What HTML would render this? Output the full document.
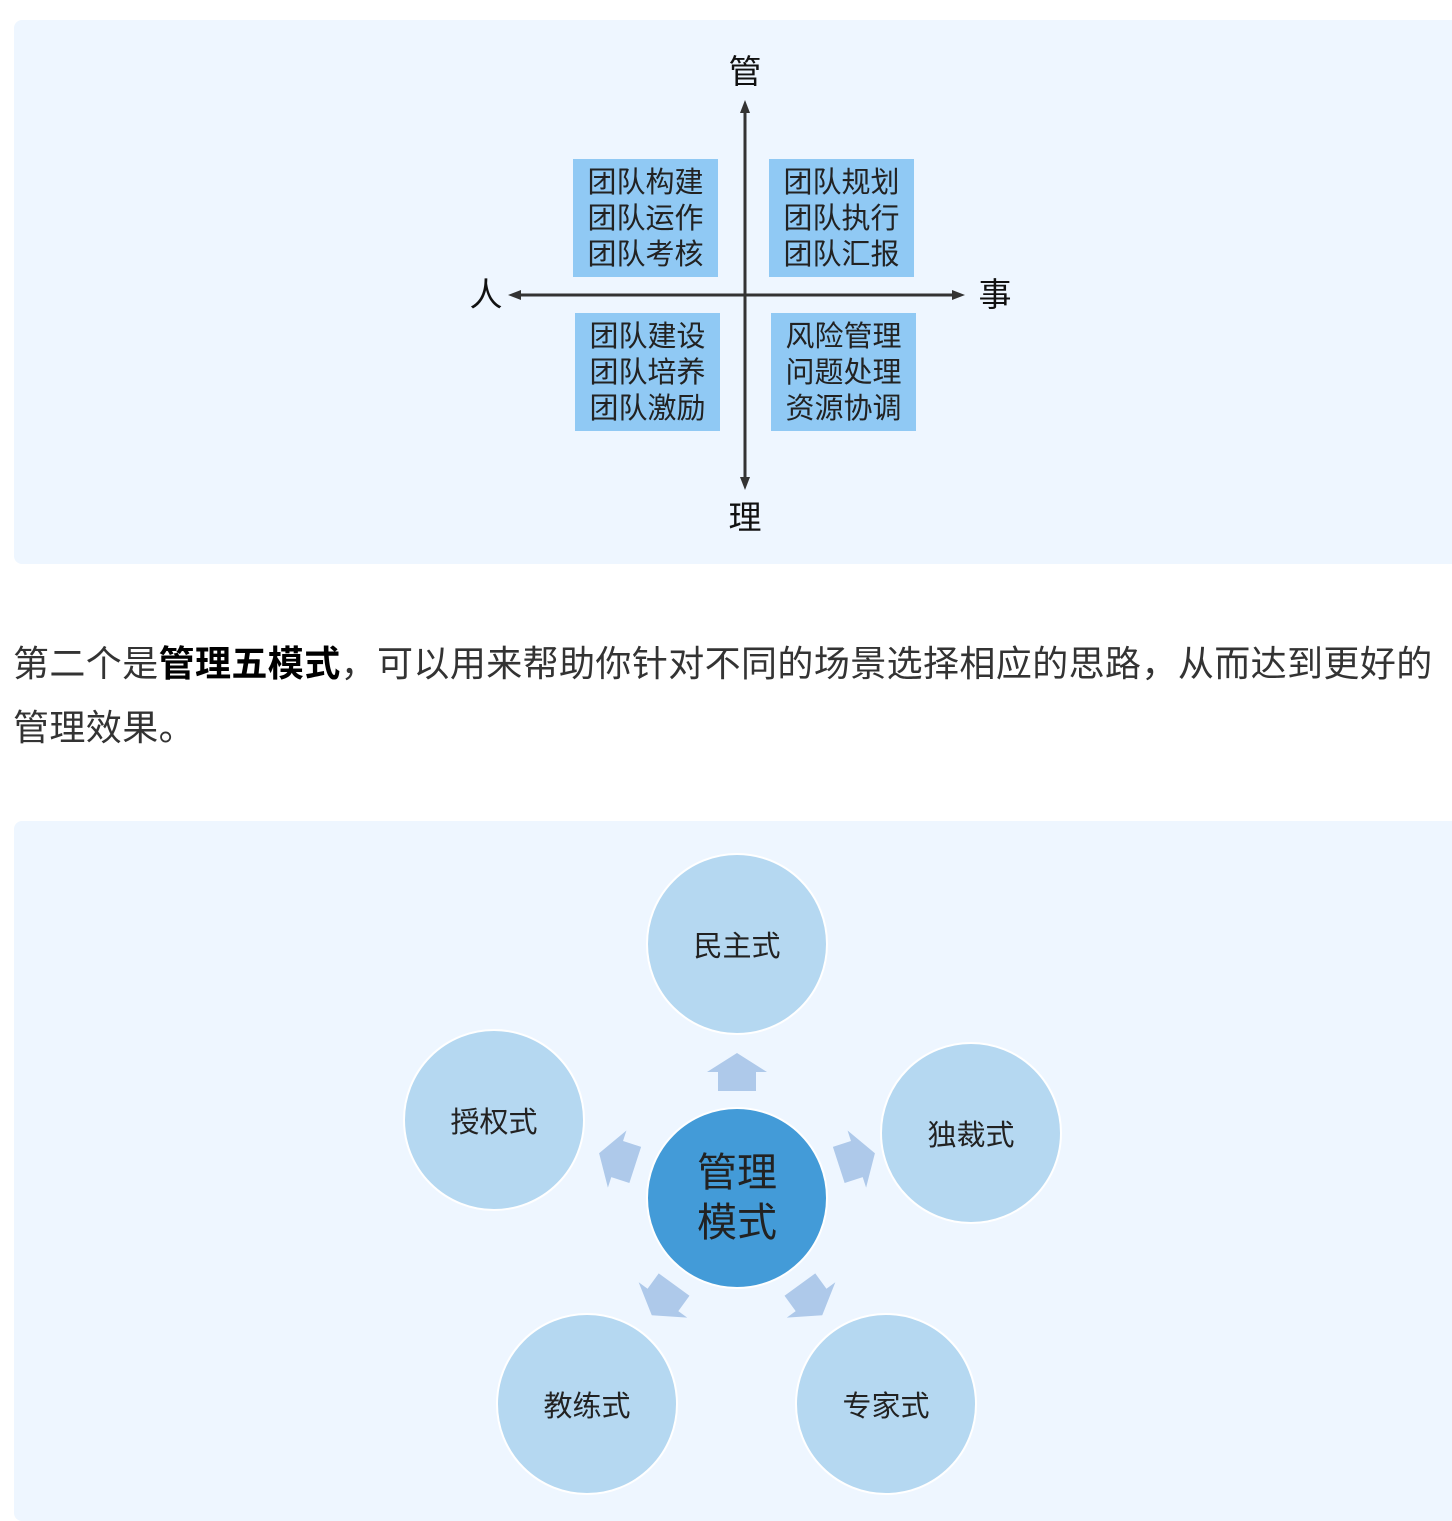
<!DOCTYPE html>
<html><head><meta charset="utf-8"><style>
body{margin:0;width:1452px;height:1500px;background:#fff;position:relative;overflow:hidden;font-family:"Liberation Sans","Noto Sans CJK SC",sans-serif;color:#222}
.panel{position:absolute;left:14px;width:1450px;background:#eef6ff;border-radius:8px}
.box{position:absolute;width:145px;height:118px;background:#90c9f4;box-sizing:border-box;padding:6px 0 0 0;font-size:29px;line-height:36px;text-align:center;color:#222}
.lbl{position:absolute;font-size:33px;line-height:40px;width:40px;text-align:center;color:#111}
.c{position:absolute;width:182px;height:182px;border-radius:50%;background:#b5d8f1;border:2px solid #fff;display:flex;align-items:center;justify-content:center;font-size:29px;color:#222;box-sizing:border-box}
p{position:absolute;left:13px;top:632px;margin:0;width:1440px;font-size:36px;line-height:64px;color:#333;letter-spacing:0.4px}
</style></head><body>
<div class="panel" style="top:20px;height:544px"></div>
<svg style="position:absolute;left:0;top:0" width="1452" height="600">
<line x1="745" y1="110" x2="745" y2="480" stroke="#333" stroke-width="3"/>
<polygon points="745,100 740,113 750,113" fill="#333"/>
<polygon points="745,490 740,477 750,477" fill="#333"/>
<line x1="518" y1="295" x2="955" y2="295" stroke="#333" stroke-width="3"/>
<polygon points="508,295 521,290 521,300" fill="#333"/>
<polygon points="965,295 952,290 952,300" fill="#333"/>
</svg>
<div class="lbl" style="left:725px;top:52px">管</div>
<div class="lbl" style="left:725px;top:498px">理</div>
<div class="lbl" style="left:466px;top:275px">人</div>
<div class="lbl" style="left:975px;top:275px">事</div>
<div class="box" style="left:573px;top:159px">团队构建<br>团队运作<br>团队考核</div>
<div class="box" style="left:769px;top:159px">团队规划<br>团队执行<br>团队汇报</div>
<div class="box" style="left:575px;top:313px">团队建设<br>团队培养<br>团队激励</div>
<div class="box" style="left:771px;top:313px">风险管理<br>问题处理<br>资源协调</div>
<p>第二个是<b style="color:#000">管理五模式</b>，可以用来帮助你针对不同的场景选择相应的思路，从而达到更好的管理效果。</p>
<div class="panel" style="top:821px;height:700px"></div>
<svg style="position:absolute;left:0;top:0" width="1452" height="1500">
<g fill="#aec9ea">
<polygon points="737,1053 767,1072 756,1072 756,1091 718,1091 718,1072 707,1072"/>
<polygon points="737,1053 767,1072 756,1072 756,1091 718,1091 718,1072 707,1072" transform="rotate(72 737 1198)"/>
<polygon points="737,1053 767,1072 756,1072 756,1091 718,1091 718,1072 707,1072" transform="rotate(144 737 1198)"/>
<polygon points="737,1053 767,1072 756,1072 756,1091 718,1091 718,1072 707,1072" transform="rotate(216 737 1198)"/>
<polygon points="737,1053 767,1072 756,1072 756,1091 718,1091 718,1072 707,1072" transform="rotate(288 737 1198)"/>
</g></svg>
<div class="c" style="left:646px;top:853px">民主式</div>
<div class="c" style="left:403px;top:1029px">授权式</div>
<div class="c" style="left:880px;top:1042px">独裁式</div>
<div class="c" style="left:496px;top:1313px">教练式</div>
<div class="c" style="left:795px;top:1313px">专家式</div>
<div class="c" style="left:646px;top:1107px;background:#439bd8;font-size:40px;line-height:50px;text-align:center">管理<br>模式</div>
</body></html>
